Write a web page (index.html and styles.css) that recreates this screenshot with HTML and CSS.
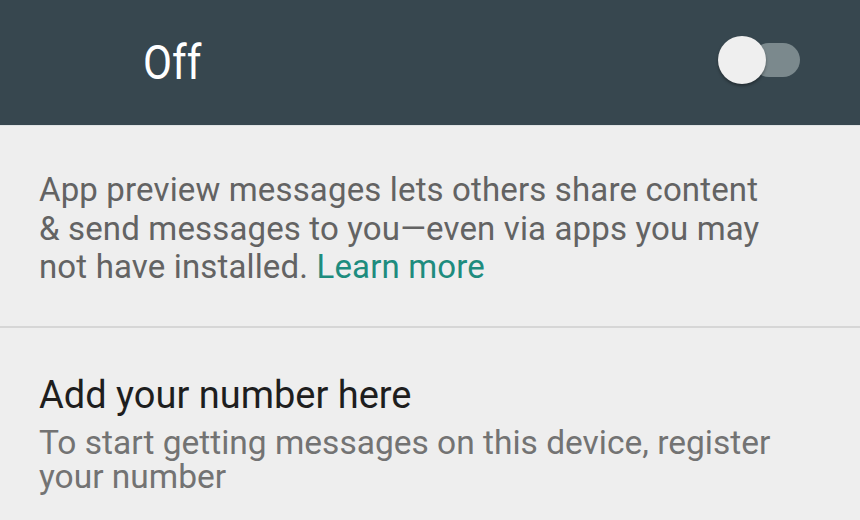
FILE: index.html
```
<!DOCTYPE html>
<html>
<head>
<meta charset="utf-8">
<link rel="stylesheet" href="styles.css">
</head>
<body>
<header class="bar">
  <span class="bar-label">Off</span>
  <span class="switch"><span class="track"></span><span class="thumb"></span></span>
</header>
<section class="info">
  <p class="info-text">App preview messages lets others share content &amp; send messages to you—even via apps you may not have installed. <a class="link">Learn more</a></p>
</section>
<section class="item">
  <div class="item-title">Add your number here</div>
  <div class="item-sub">To start getting messages on this device, register your number</div>
</section>
</body>
</html>
```
FILE: styles.css
```
html, body { margin: 0; padding: 0; }
body {
  width: 860px;
  height: 520px;
  overflow: hidden;
  background: #eeeeee;
  font-family: Roboto, "Noto Sans", sans-serif;
}
.bar {
  height: 126px;
  background: #37474f;
  display: flex;
  align-items: center;
  justify-content: space-between;
  padding: 0 60px 0 143px;
  box-sizing: border-box;
  border-bottom: 1px solid #dfe3e4;
}
.bar-label {
  color: #ffffff;
  font-size: 49px;
  line-height: 60px;
  display: inline-block;
  transform: scaleX(0.86);
  transform-origin: left center;
  margin-top: 0;
}
.switch {
  position: relative;
  width: 82px;
  height: 48px;
  display: block;
  margin-top: -5px;
}
.track {
  position: absolute;
  left: 34px;
  top: 7px;
  width: 48px;
  height: 34px;
  border-radius: 17px;
  background: #7b898d;
}
.thumb {
  position: absolute;
  left: 0;
  top: 0;
  width: 48px;
  height: 48px;
  border-radius: 50%;
  background: #efefef;
  box-shadow: 0 2px 3px rgba(0,0,0,0.35);
}
.info {
  padding: 45px 0 0 39px;
  height: 202px;
  box-sizing: border-box;
  border-bottom: 2px solid #d6d6d6;
}
.info-text {
  margin: 0;
  width: 740px;
  font-size: 33px;
  letter-spacing: 0.15px;
  line-height: 38.5px;
  color: #636363;
}
.link { color: #1e8c7e; }
.item {
  padding: 45px 40px 0 39px;
}
.item-title {
  font-size: 38px;
  line-height: 44px;
  color: #1e1e1e;
}
.item-sub {
  margin-top: 9px;
  font-size: 33.5px;
  line-height: 34px;
  color: #737373;
}
```
